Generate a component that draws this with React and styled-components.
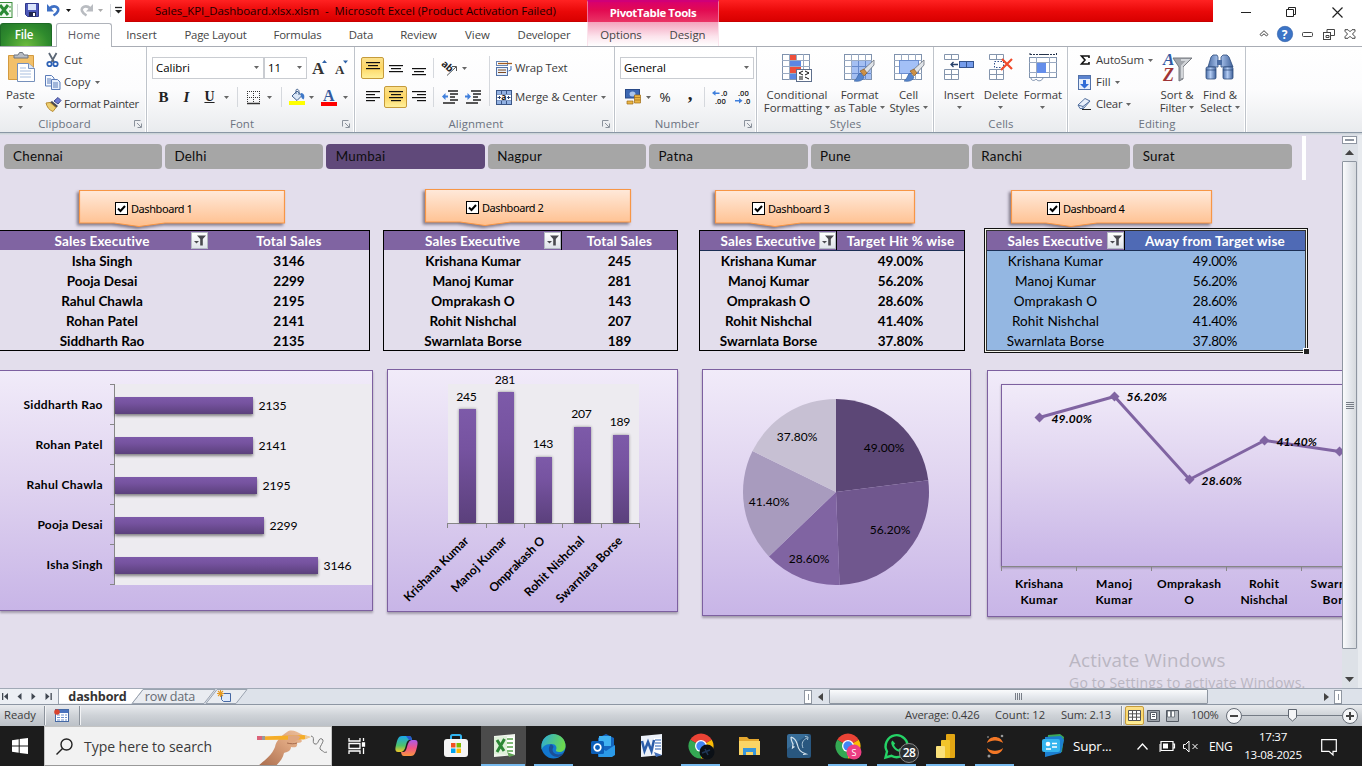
import React from 'react';
import styled, { createGlobalStyle, css } from 'styled-components';

const UI = '"Open Sans", "Noto Sans", sans-serif';
const SHEET = 'Lato, "Open Sans", sans-serif';

const Global = createGlobalStyle`
  * { box-sizing: border-box; }
  body { margin: 0; overflow: hidden; background: #fff; font-family: ${UI}; }
`;

const Window = styled.div`
  width: 1362px; height: 766px; display: flex; flex-direction: column; overflow: hidden;
  font-size: 11.4px; color: #3b3b3b; white-space: nowrap; cursor: default;
`;
const Svg = styled.svg`display: block; flex: none; overflow: visible;`;
const Spacer = styled.div`flex: ${p => (p.$w ? 'none' : 1)}; width: ${p => (p.$w ? p.$w + 'px' : 'auto')};`;

/* ---------- title bar ---------- */
const TitleBar = styled.div`height: 22px; display: flex; flex: none;`;
const QuickAccess = styled.div`width: 125px; height: 20px; display: flex; align-items: center;`;
const TitleStrip = styled.div`
  width: 1088px; display: flex; background: linear-gradient(#ff2222, #e90808 55%, #d90000); border-bottom: 1px solid #c80000;
`;
const TitleText = styled.div`
  width: 462px; padding-left: 30px; line-height: 21px; font-size: 11.4px; color: #1c0000; white-space: pre;
`;
const ContextTitle = styled.div`
  width: 132px; height: 22px; text-align: center; font-weight: 700; font-size: 11.4px; line-height: 21px; color: #fff; letter-spacing: -0.4px;
  background: linear-gradient(#d9006c, #e20a52 40%, #ea3465); border-top: 2px solid #cf0078; border-left: 1px solid #f0709a; border-right: 1px solid #f0709a;
`;
const WinControls = styled.div`flex: 1; display: flex; align-items: center; padding-left: 28px; padding-top: 2px; gap: 35px;`;

/* ---------- ribbon tabs ---------- */
const TabRow = styled.div`height: 25px; display: flex; flex: none; border-bottom: 1px solid #a9adb5;`;
const FileTab = styled.div`
  width: 52px; margin-top: 1px; border-radius: 3px 3px 0 0; background: radial-gradient(ellipse at 50% 100%, #6dbb3e, #2e8a2d 65%, #23752a);
  border: 1px solid #1d6a25; border-bottom: 0; color: #fff; font-weight: 600; text-align: center; line-height: 22px; padding-right: 4px; font-size: 11.6px; letter-spacing: -0.2px;
`;
const Tab = styled.div`
  width: ${p => p.$w}px; flex: none; text-align: center; line-height: 25px; letter-spacing: ${p => p.$ls || 0}px; color: #454545;
  ${p => p.$active && css`
    margin: 1px 0 -1px 4px; line-height: 22px; border: 1px solid #b0b4bb; border-bottom: 0; border-radius: 3px 3px 0 0; background: #fff; color: #5b5b66;
  `}
`;
const ContextTabs = styled.div`
  width: 132px; display: flex; padding-left: 3px; background: linear-gradient(#f4a3bd, #fce3ec 60%, #fff);
  border-left: 1px solid #fbe3ec; border-right: 1px solid #fbe3ec;
`;
const TabTools = styled.div`display: flex; align-items: center; gap: 8px; padding-left: 540px;`;

/* ---------- ribbon ---------- */
const Ribbon = styled.div`
  height: 86px; flex: none; display: flex; background: linear-gradient(#fff, #fcfcfd 50%, #e9ebee); border-bottom: 1px solid #8a97a5;
`;
const RibbonEdge = styled.div`height: 2px; flex: none; background: linear-gradient(#c6ced2, #dfe1e9);`;
const Group = styled.div`
  width: ${p => p.$w}px; display: flex; flex-direction: column; border-right: 1px solid #bfc4cb; box-shadow: inset -1px 0 #fff, 1px 0 #fff;
`;
const GroupBody = styled.div`height: 69px; display: flex; padding-left: ${p => p.$pl || 0}px;`;
const GroupName = styled.div`height: 15px; display: flex; align-items: center; color: #6b7280; padding: 0 4px 0 0;`;
const GroupLabel = styled.div`
  flex: 1; text-align: center; line-height: 15px; padding-left: ${p => (p.$corner ? 0 : 5)}px; padding-right: ${p => (p.$corner ? 5 : 0)}px; letter-spacing: 0.1px;
`;
const Stack = styled.div`display: flex; flex-direction: column; padding-top: ${p => p.$pt || 0}px; gap: ${p => p.$gap || 0}px; width: ${p => (p.$w ? p.$w + 'px' : 'auto')};`;
const Line = styled.div`height: 22px; display: flex; align-items: center; padding-left: ${p => p.$pl || 0}px;`;
const Slot = styled.div`
  width: ${p => p.$w || 23}px; height: ${p => p.$h || 22}px; display: flex; align-items: center; justify-content: center; flex: none;
  ${p => p.$on && css`border: 1px solid #c59b3b; border-radius: 2px; background: linear-gradient(#fbe08b, #fdd766 50%, #fff09a);`}
`;
const Rule = styled.div`width: 1px; height: ${p => p.$h || 20}px; margin: ${p => p.$m || '0 5px'}; background: #d5d8dd; flex: none;`;
const Label = styled.span`margin-left: ${p => p.$ml ?? 4}px; letter-spacing: ${p => p.$ls ?? 0}px; padding-bottom: 2px;`;
const Combo = styled.div`
  width: ${p => p.$w}px; height: 22px; border: 1px solid #c9ccd1; background: #fff; color: #000; display: flex; align-items: center;
  justify-content: space-between; padding: 0 4px 1px 3px; flex: none;
`;
const Large = styled.div`
  width: ${p => p.$w}px; display: flex; flex-direction: column; align-items: center; padding-top: 5px; line-height: 13px; gap: 4px;
  text-align: center; letter-spacing: ${p => p.$ls || 0}px;
`;
const LargeText = styled.div`display: flex; flex-direction: column; align-items: center;`;
const LargeLine = styled.div`display: flex; align-items: center; height: 13px; gap: 3px;`;
const Glyph = styled.span`
  font-family: "Liberation Serif", serif; font-size: ${p => p.$s || 15}px; font-weight: 700; color: #222; line-height: 20px; padding-bottom: ${p => p.$up || 0}px;
  font-style: ${p => (p.$i ? 'italic' : 'normal')}; text-decoration: ${p => (p.$u ? 'underline' : 'none')};
`;
const Percent = styled.span`font-size: 13.5px; padding-bottom: 1px; color: #222;`;

const Caret = ({ c = '#666' }) => <Svg width="5" height="3"><path d="M0 0h5L2.500 3z" fill={c} /></Svg>;
const Corner = () => (
  <Svg width="8" height="8" fill="none" stroke="#8b929c"><path d="M.5 6.500V.5h6M3 3l4 4M7.500 3.500v4h-4" /></Svg>
);
const Bars = ({ y = 1, w = [14, 10, 14, 10], align = 'c', step = 3, h = 14 }) => (
  <Svg width="14" height={h}>
    {w.map((n, i) => <rect key={i} x={align === 'l' ? 0 : align === 'r' ? 14 - n : (14 - n) / 2} y={y + i * step} width={n} height="1.200" fill="#111" />)}
  </Svg>
);

/* ---------- drawn icons ---------- */
const ExcelSmall = () => (
  <Svg width="13" height="16"><rect x="-4" y=".5" width="16" height="15" fill="#f2faf0" stroke="#3b8c3c" /><path d="M0 3l8 10M8 3l-8 10" stroke="#2b8b34" strokeWidth="3" /><path d="M9 4h2v2H9zM9 8h2v2H9z" fill="#8fc68c" /></Svg>
);
const Save = () => (
  <Svg width="14" height="14"><path d="M.5.5h13v13h-11l-2-2z" fill="#4d58b8" stroke="#30398c" /><path d="M3 1h8v6H3z" fill="#dbe5fb" /><path d="M4 9h7v4.500H4z" fill="#20264f" /><path d="M8 10h2v3H8z" fill="#fff" /></Svg>
);
const Undo = ({ c = '#3e6fc4', flip }) => (
  <Svg width="14" height="14" fill="none"><g transform={flip ? 'translate(14 0) scale(-1 1)' : undefined}><path d="M2.500 5.500C7 1.500 12.500 4 11 8c-.7 1.800-2 3-4.500 4.500" stroke={c} strokeWidth="2.600" /><path d="M0 1v7.500h7z" fill={c} /></g></Svg>
);
const Paste = () => (
  <Svg width="28" height="32"><path d="M1.500 3.500h25v24h-25z" fill="#f2c069" stroke="#d39a3f" /><path d="M7 6V3h4l1.500-2.500h3L17 3h4v3z" fill="#b7bcc4" stroke="#6f757f" /><path d="M10.500 11.500h11l6 5v13h-17z" fill="#fff" stroke="#7690bb" /><path d="M21.500 11.500v5h6" fill="#dbe6f6" stroke="#7690bb" /><path d="M13 16h6M13 19h11M13 22h11M13 25h11" stroke="#a8bfdf" /></Svg>
);
const Cut = () => (
  <Svg width="14" height="16" fill="none"><path d="M3 1l5 9M10.500 1l-5 9" stroke="#5b6675" strokeWidth="1.800" /><circle cx="3.500" cy="12" r="2.200" stroke="#2f62b5" strokeWidth="1.800" /><circle cx="9.500" cy="12" r="2.200" stroke="#2f62b5" strokeWidth="1.800" /></Svg>
);
const Copy = () => (
  <Svg width="16" height="15" stroke="#5b7cb8"><path d="M.5.500h6l2.500 2.500v8h-8.500z" fill="#f6f9ff" /><path d="M2 4h4M2 6h4M2 8h4" /><path d="M6.500 4.500h6l2.500 2.500v7.500H6.500z" fill="#e6effc" /><path d="M8 8h5M8 10h5M8 12h5" /></Svg>
);
const Painter = () => (
  <Svg width="16" height="15"><path d="M9 4l4-3.500 3 3L13 7z" fill="#6e7bd0" stroke="#3d478f" /><path d="M7 4l6 5-2 2-7-5z" fill="#4a4a52" /><path d="M1 6l4-.5 6 5-3 4C4 13 2 10 1 6z" fill="#edcf72" stroke="#b98c32" /></Svg>
);
const GrowA = ({ up }) => (
  <Svg width="16" height="18"><text x={up ? 0 : 0} y={up ? 15 : 14.5} fontFamily="Liberation Serif, serif" fontWeight="700" fontSize={up ? 17 : 13} fill="#333">A</text><path d={up ? 'M10 4h5L12.500 1z' : 'M8 1.500h5L10.500 4.500z'} fill="#2f62a8" /></Svg>
);
const Borders = () => (
  <Svg width="13" height="13" stroke="#333"><path d="M.5 0v12M6.500 0v12M12.500 0v12M0 .5h13M0 6.500h13" strokeDasharray="1 1" /><path d="M0 12.500h13" strokeWidth="1.500" /></Svg>
);
const Bucket = () => (
  <Svg width="16" height="16"><path d="M3 7l5-5 5 4.500-5 5z" fill="#dbe7f7" stroke="#43628f" /><path d="M7 5V1.500c0-2 3-1.500 3 1V6" fill="none" stroke="#43628f" /><path d="M12 4c3.500 0 4 4 2.500 6.500-2-1-3.500-4-2.500-6.500z" fill="#3e78c9" /><rect y="12" width="16" height="4" fill="#ffff00" /></Svg>
);
const FontColor = () => (
  <Svg width="16" height="17"><text x="2" y="12" fontFamily="Liberation Serif, serif" fontWeight="700" fontSize="16" fill="#335a9e">A</text><rect y="13" width="16" height="4" fill="#f00" /></Svg>
);
const Orient = () => (
  <Svg width="16" height="15"><text x="-1" y="7" transform="rotate(42 3 5)" fontSize="10" fontWeight="700" fontFamily="Open Sans" fill="#222" textLength="12">ab</text><path d="M5 14.500L14 6M14.500 10V5.500H10" fill="none" stroke="#555" /></Svg>
);
const Indent = ({ right }) => (
  <Svg width="16" height="14"><path d="M6 1h10M8 4h8M8 7h5M8 10h8M1 13h12" stroke="#222" strokeWidth="1.300" /><path d={right ? 'M0 5.500h2.500V3L6 6.500 2.500 10V7.500H0z' : 'M6 5.500H3.500V3L0 6.500 3.500 10V7.500H6z'} fill="#3f7fdc" /></Svg>
);
const Wrap = () => (
  <Svg width="16" height="15"><rect x=".5" y=".5" width="11" height="4" fill="#fff" stroke="#6685b5" /><path d="M2 2.500h14" stroke="#a35c20" strokeWidth="1.300" /><rect x=".5" y="6.500" width="11" height="8" fill="#e9f1fc" stroke="#5572a5" /><path d="M2 9h8M2 11.500h8" stroke="#7d4a22" /><path d="M15 5v4l-2.500 1" fill="none" stroke="#3b6cb7" /></Svg>
);
const Merge = () => (
  <Svg width="16" height="15"><rect x=".5" y=".5" width="15" height="14" fill="#fff" stroke="#3b5788" /><path d="M1 1h14v3H1zM1 11h14v3H1z" fill="#93b2e3" /><path d="M5.500 1v3M10.500 1v3M5.500 11v3M10.500 11v3" stroke="#3b5788" /><path d="M1 4.500h14M1 10.500h14" stroke="#7e98c4" /><path d="M1.500 7.500h3M11.500 7.500h3M3 6l1.500 1.500L3 9M13 6l-1.500 1.500L13 9" stroke="#27406f" fill="none" /><text x="5.300" y="10" fontSize="8.500" fontWeight="700" fontFamily="Open Sans" fill="#111">a</text></Svg>
);
const Currency = () => (
  <Svg width="16" height="16"><rect x=".5" y=".5" width="14" height="8.500" fill="#3c67b2" stroke="#294a87" /><ellipse cx="7.500" cy="5" rx="3" ry="2.500" fill="#a9c4ec" /><path d="M9.500 6h6v8h-6zM2 12h6v3H2z" fill="#eab544" stroke="#9f6c17" strokeWidth=".7" /><path d="M9.500 8.500h6M9.500 11h6" stroke="#9f6c17" strokeWidth=".7" /></Svg>
);
const Decimal = ({ dec }) => (
  <Svg width="16" height="14" fontFamily="Open Sans" fontWeight="600" fontSize="7.600" fill="#222">
    <text x={dec ? 3 : 9} y="5.500">{dec ? '.00' : '.0'}</text><text x={dec ? 9 : 3} y="14">{dec ? '.0' : '.00'}</text>
    <path d={dec ? 'M0 10h4V8l3.500 2.800L4 13.500v-2H0z' : 'M7.500 2.500h-4V.3L0 3l3.500 2.700V4h4z'} fill="#3f7fdc" />
  </Svg>
);
const Grid = () => (
  <g><rect x="1.500" y="2.500" width="27" height="25" fill="#fff" stroke="#8093ae" /><path d="M8.500 2v26M15.500 2v26M22.500 2v26M1 8.500h28M1 14.500h28M1 21.500h28" stroke="#9aaac2" /></g>
);
const Brush = () => (
  <g><path d="M20 18L31 8v5l-8 9z" fill="#dfe3e8" stroke="#6c727c" strokeWidth=".8" /><path d="M17 19l4-2 3 4-3 3z" fill="#ce9145" stroke="#80531f" strokeWidth=".6" /><path d="M11 29c3-1 3-6 6-8l4 4c-1 4-6 5-10 4z" fill="#5584cb" stroke="#365f9f" strokeWidth=".6" /></g>
);
const CondFmt = () => (
  <Svg width="32" height="32"><Grid /><path d="M9 3h6v5H9zM9 15h11v6H9z" fill="#ee4f3a" /><path d="M9 9h11v5H9zM9 22h6v5H9z" fill="#5b87e2" /><rect x="15.500" y="17.500" width="15" height="12" fill="#fff" stroke="#5e6f8c" /><path d="M22 19l-4 2 4 2M18 25h4M18 27h4M24 19l4 2-4 2M24 25l4 2" fill="none" stroke="#111" /></Svg>
);
const FmtTable = () => <Svg width="34" height="32"><Grid /><path d="M9 9h19v18H9z" fill="#86a9ee" opacity=".75" /><path d="M15.500 9v18M22.500 9v18M9 14.500h19M9 21.500h19" stroke="#6689cc" /><Brush /></Svg>;
const CellStyles = () => <Svg width="32" height="32"><Grid /><rect x="6.500" y="8.500" width="19" height="13" fill="#a3c0f7" stroke="#6a8dd0" /><Brush /></Svg>;
const MiniGrid = ({ y, x = 1 }) => <path d={`M${x + .5} ${y + .5}h14v10h-14zM${x + 7.500} ${y}v10M${x} ${y + 5.500}h14`} fill="#fff" stroke="#8495ad" />;
const InsertIcon = () => <Svg width="32" height="32"><path d="M1.500 2.500h14v5h-14zM8.500 2v5" fill="#fff" stroke="#8495ad" /><MiniGrid y={17} /><rect x="16.500" y="9.500" width="14" height="6" fill="#759ceb" stroke="#34538d" /><path d="M23.500 10v5" stroke="#34538d" /><path d="M15 12.500H8M10.500 10L8 12.500l2.500 2.500" fill="none" stroke="#253f6a" strokeWidth="1.300" /></Svg>;
const DeleteIcon = () => <Svg width="32" height="32"><path d="M4.500 2.500h14v5h-14zM11.500 2v5" fill="#fff" stroke="#8495ad" /><MiniGrid y={17} x={4} /><path d="M9.500 9.500h9v6h-9z" fill="none" stroke="#34538d" strokeDasharray="1.500 1.500" /><path d="M17 7l10 10M27 7L16 18" stroke="#f04a2b" strokeWidth="2.200" /></Svg>;
const FormatIcon = () => <Svg width="32" height="32"><rect x="2.500" y="5.500" width="27" height="20" fill="#fff" stroke="#8093ae" /><path d="M9.500 5v20M22.500 5v20M2 10.500h28M2 20.500h28" stroke="#9aaac2" /><rect x="10" y="11" width="9" height="10" fill="#658eea" /><path d="M3 1v3M3 2.500h9M20 2.500h10M29.500 1v3" stroke="#25334b" strokeDasharray="2 1" /><path d="M12 2.500h8" stroke="#25334b" /><path d="M4 26c0 3 4 3 5 1 2 3 6 2 7-1" fill="#fff" stroke="#8093ae" /></Svg>;
const FillIcon = () => <Svg width="13" height="15"><rect x=".5" y=".5" width="12" height="14" fill="#e5eefb" stroke="#5271a8" /><path d="M1 1h11v3H1z" fill="#5c84cf" /><path d="M5 5h3v4h3l-4.500 4.500L2 9h3z" fill="#2f6bd6" /></Svg>;
const Eraser = () => <Svg width="15" height="12"><path d="M1 7l7-6.500 5 2.500-6.500 7.500H3z" fill="#e8effb" stroke="#53709e" /><path d="M1 7l5 1.500V11M6 8.500L13 3" fill="none" stroke="#53709e" /><path d="M5 11.500h9" stroke="#222" /></Svg>;
const SortIcon = () => (
  <Svg width="32" height="32"><path d="M12 6h19l-9 9v12l-4 2V15z" fill="#a2a6ac" stroke="#74787f" /><path d="M20 8h7l-6 6v12" fill="none" stroke="#d3d6da" strokeWidth="2" /><g fontFamily="Liberation Serif, serif" fontWeight="700" fontStyle="italic"><text x="2" y="13" fontSize="17" fill="#335aa3">A</text><text x="2" y="29" fontSize="18" fill="#9f3436">Z</text></g></Svg>
);
const Binoculars = () => (
  <Svg width="32" height="32"><defs><linearGradient id="bino"><stop offset="0" stopColor="#4a6da6" /><stop offset=".45" stopColor="#b3ccf3" /><stop offset="1" stopColor="#3f619a" /></linearGradient></defs><path d="M7 5l2-2h4l1 2v10H4zM17 5l2-2h4l2 2 4 10H17z" fill="url(#bino)" stroke="#2e4c7c" strokeWidth=".8" /><path d="M13 8h5v5h-5z" fill="#4b6da4" /><rect x="2" y="15" width="10" height="12" rx="1.500" fill="url(#bino)" stroke="#2e4c7c" strokeWidth=".8" /><rect x="19" y="15" width="10" height="12" rx="1.500" fill="url(#bino)" stroke="#2e4c7c" strokeWidth=".8" /><path d="M2 18h10M19 18h10" stroke="#2e4c7c" strokeWidth=".8" /></Svg>
);

const BigButton = ({ w, icon, lines, ls, caretBelow }) => (
  <Large $w={w} $ls={ls}>
    {icon}
    <LargeText>
      {lines.map((l, i) => <LargeLine key={l}>{l}{!caretBelow && i === lines.length - 1 && <Caret />}</LargeLine>)}
      {caretBelow && <LargeLine><Caret /></LargeLine>}
    </LargeText>
  </Large>
);
const Foot = ({ children, corner }) => <GroupName><GroupLabel $corner={corner}>{children}</GroupLabel>{corner && <Corner />}</GroupName>;

const RibbonPanel = () => (
  <Ribbon>
    <Group $w={147}>
      <GroupBody>
        <BigButton w={41} icon={<Paste />} lines={['Paste']} caretBelow />
        <Stack $pt={2}>
          <Line $pl={5}><Slot $w={14}><Cut /></Slot><Label>Cut</Label></Line>
          <Line $pl={4}><Copy /><Label $ml={3} $ls={-0.1}>Copy</Label><Spacer $w={5} /><Caret /></Line>
          <Line $pl={4}><Painter /><Label $ml={3} $ls={-0.32}>Format Painter</Label></Line>
        </Stack>
      </GroupBody>
      <Foot corner>Clipboard</Foot>
    </Group>
    <Group $w={208}>
      <GroupBody $pl={5}>
        <Stack $pt={10} $gap={7}>
          <Line><Combo $w={112}>Calibri<Caret /></Combo><Combo $w={43}>11<Caret /></Combo><Spacer $w={5} /><GrowA up /><Spacer $w={7} /><GrowA /></Line>
          <Line>
            <Slot><Glyph $up={1}>B</Glyph></Slot><Slot><Glyph $i $up={1}>I</Glyph></Slot><Slot><Glyph $u $s={14} $up={1}>U</Glyph></Slot><Slot $w={11}><Caret /></Slot>
            <Rule /><Slot $w={20}><Borders /></Slot><Slot $w={13}><Caret /></Slot><Rule /><Slot $w={20}><Bucket /></Slot><Slot $w={9}><Caret /></Slot>
            <Slot $w={25}><FontColor /></Slot><Slot $w={9}><Caret /></Slot>
          </Line>
        </Stack>
      </GroupBody>
      <Foot corner>Font</Foot>
    </Group>
    <Group $w={260}>
      <GroupBody $pl={6}>
        <Stack $pt={10} $gap={7} $w={128}>
          <Line><Slot $on><Bars y={1} w={[14, 10, 14]} /></Slot><Slot><Bars y={4} w={[14, 10, 14]} /></Slot><Slot><Bars y={7} w={[14, 10, 14]} h={15} /></Slot><Rule $m="0 4px 0 3px" /><Slot $w={24}><Orient /></Slot><Slot $w={5}><Caret /></Slot></Line>
          <Line><Slot><Bars y={1} w={[14, 9, 14, 9]} align="l" /></Slot><Slot $on><Bars /></Slot><Slot><Bars y={1} w={[14, 9, 14, 9]} align="r" /></Slot><Rule $m="0 4px 0 3px" /><Slot><Indent /></Slot><Slot><Indent right /></Slot></Line>
        </Stack>
        <Rule $h={50} $m="9px 6px 0 0" />
        <Stack $pt={10} $gap={7}>
          <Line><Wrap /><Label $ml={3} $ls={-0.2}>Wrap Text</Label></Line>
          <Line><Merge /><Label $ml={3} $ls={-0.1}>Merge &amp; Center</Label><Spacer $w={4} /><Caret /></Line>
        </Stack>
      </GroupBody>
      <Foot corner>Alignment</Foot>
    </Group>
    <Group $w={142}>
      <GroupBody $pl={5}>
        <Stack $pt={10} $gap={7}>
          <Combo $w={134}>General<Caret /></Combo>
          <Line><Slot $w={26}><Currency /></Slot><Caret /><Slot $w={28}><Percent>%</Percent></Slot><Slot $w={22}><Glyph $s={19} $up={7}>,</Glyph></Slot><Rule $m="0 4px 0 3px" /><Slot $w={22}><Decimal /></Slot><Slot $w={24}><Decimal dec /></Slot></Line>
        </Stack>
      </GroupBody>
      <Foot corner>Number</Foot>
    </Group>
    <Group $w={177}>
      <GroupBody $pl={5}>
        <BigButton w={70} icon={<CondFmt />} lines={['Conditional', 'Formatting']} />
        <BigButton w={55} icon={<FmtTable />} lines={['Format', 'as Table']} ls={-0.1} />
        <BigButton w={43} icon={<CellStyles />} lines={['Cell', 'Styles']} ls={-0.1} />
      </GroupBody>
      <Foot>Styles</Foot>
    </Group>
    <Group $w={134}>
      <GroupBody $pl={4}>
        <BigButton w={42} icon={<InsertIcon />} lines={['Insert']} caretBelow />
        <BigButton w={42} icon={<DeleteIcon />} lines={['Delete']} caretBelow />
        <BigButton w={42} icon={<FormatIcon />} lines={['Format']} caretBelow />
      </GroupBody>
      <Foot>Cells</Foot>
    </Group>
    <Group $w={178}>
      <GroupBody $pl={9}>
        <Stack $pt={2} $w={77}>
          <Line><Slot $w={15}><Svg width="10" height="10"><path d="M9 3V1H1.500L5 5 1.500 9H9V7" fill="none" stroke="#111" strokeWidth="1.600" /></Svg></Slot><Label $ls={-0.15}>AutoSum</Label><Spacer $w={4} /><Caret /></Line>
          <Line><Slot $w={15}><FillIcon /></Slot><Label>Fill</Label><Spacer $w={4} /><Caret /></Line>
          <Line><Slot $w={15}><Eraser /></Slot><Label $ls={-0.2}>Clear</Label><Spacer $w={4} /><Caret /></Line>
        </Stack>
        <BigButton w={46} icon={<SortIcon />} lines={['Sort &', 'Filter']} />
        <BigButton w={40} icon={<Binoculars />} lines={['Find &', 'Select']} />
      </GroupBody>
      <Foot>Editing</Foot>
    </Group>
  </Ribbon>
);

/* ---------- worksheet ---------- */
const Work = styled.div`height: 553px; flex: none; display: flex;`;
const Sheet = styled.div`width: 1342px; height: 553px; overflow: hidden; background: #e3deec; position: relative; font-family: ${SHEET}; color: #000;`;
const Slicers = styled.div`height: 55px; display: flex; padding: 9px 0 0 3.6px; gap: 3px;`;
const Slicer = styled.div`
  width: 158.4px; height: 25px; border-radius: 4px; background: ${p => (p.$on ? '#60497a' : '#a6a6a6')}; color: #0d0d0d; font-size: 13.4px;
  line-height: 25px; padding-left: 9.4px; letter-spacing: 0.25px; flex: none;
`;
const SlicerEdge = styled.div`width: 4px; height: 44px; background: #fff; margin: -8px 0 0 7.4px;`;
const CalloutRow = styled.div`height: 40px; display: flex; align-items: flex-start;`;
const Callout = styled.div`
  width: ${p => p.$w}px; height: 34px; margin-left: ${p => p.$ml}px; margin-top: ${p => p.$mt || 0}px; position: relative; display: flex; align-items: center;
  padding: 3px 0 0 ${p => p.$pl}px; font-family: "Noto Sans", sans-serif; font-size: 11px; letter-spacing: -0.42px; flex: none;
`;
const CalloutShape = styled.svg`position: absolute; left: 0; top: 0; overflow: visible; filter: drop-shadow(-2px 2px 1.5px rgba(60,50,70,.6));`;
const Check = styled.div`width: 13px; height: 13px; border: 1px solid #000; background: #fff; margin-right: 3px; position: relative; display: flex; align-items: center; justify-content: center;`;
const CalloutText = styled.span`position: relative;`;

const CalloutBox = ({ w, ml, mt, pl, n }) => (
  <Callout $w={w} $ml={ml} $mt={mt} $pl={pl}>
    <CalloutShape width={w} height="34"><path d={`M.5.5H${w - .5}V33H86L60 36.500 35 33H.5z`} fill="url(#peach)" stroke="#f79646" strokeWidth="1.200" /></CalloutShape>
    <Check><Svg width="9" height="8"><path d="M1 3.500L3.500 6 8 1" fill="none" stroke="#000" strokeWidth="2" /></Svg></Check>
    <CalloutText>Dashboard {n}</CalloutText>
  </Callout>
);

const Tables = styled.div`height: 139px; display: flex; align-items: flex-start;`;
const Table = styled.div`
  width: ${p => p.$w}px; margin-left: ${p => p.$ml}px; height: 121px; flex: none; display: grid; grid-template-columns: ${p => p.$cols}; grid-template-rows: 19px; grid-auto-rows: 20px;
  border: 1px solid #000; border-left-width: ${p => (p.$cut ? 0 : 1)}px; position: relative; font-weight: ${p => (p.$sel ? 400 : 700)};
  ${p => p.$sel && css`background: #94b7e2; outline: 1px solid #111; outline-offset: 1px; border-color: #333; box-shadow: 0 0 0 1px #f4f4ec;`}
`;
const Head = styled.div`
  height: 19px; background: ${p => (p.$sel ? '#4f6ab5' : '#8064a2')}; color: #fff; font-weight: 700; font-size: 13.5px; line-height: 20px; text-align: center;
  padding: 1px ${p => p.$pr || 0}px 0 0; display: flex; justify-content: center; align-items: center; position: relative;
  border-right: ${p => (p.$rule ? '1px solid #000' : '0')}; letter-spacing: 0.19px; box-shadow: ${p => (p.$line ? '0 1px #1c2f55' : 'none')};
`;
const Cell = styled.div`
  font-size: 13.5px; line-height: 22px; height: 20px; text-align: center; padding-right: ${p => p.$pr || 0}px; letter-spacing: ${p => p.$ls ?? 0}px;
`;
const FilterBtn = styled.div`
  position: absolute; right: ${p => p.$r || 0}px; top: 1px; width: 17px; height: 17px; background: linear-gradient(#fff, #dfe3ea); border: 1px solid #b4b9c4;
  display: flex; align-items: center; justify-content: center;
`;
const FillHandle = styled.div`position: absolute; right: -4px; bottom: -4px; width: 6px; height: 6px; background: #222; border: solid #fff; border-width: 1px 0 0 1px;`;

const DataTable = ({ w, ml, cols, heads, rows, sel, cut, pr0, pr1, fr, rule, line }) => (
  <Table $w={w} $ml={ml} $cols={cols} $sel={sel} $cut={cut}>
    <Head $pr={pr0} $rule={rule} $line={line}>
      {heads[0]}
      <FilterBtn $r={fr}><Svg width="12" height="11"><path d="M3 .5h9L8.800 4v6.500H6.200V4z" fill="#4a4a50" /><path d="M0 6h5L2.500 8.500z" fill="#4a4a50" /></Svg></FilterBtn>
    </Head>
    <Head $sel={sel} $pr={pr1} $line={line}>{heads[1]}</Head>
    {rows.map(r => (
      <React.Fragment key={r[0]}><Cell $pr={pr0} $ls={sel ? 0.12 : 0}>{r[0]}</Cell><Cell $pr={pr1} $ls={sel ? -0.15 : 0}>{r[1]}</Cell></React.Fragment>
    ))}
    {sel && <FillHandle />}
  </Table>
);

const Charts = styled.div`display: flex; align-items: flex-start;`;
const Chart = styled.div`
  width: ${p => p.$w}px; height: ${p => p.$h}px; margin-left: ${p => p.$ml || 0}px; margin-top: ${p => p.$mt || 0}px; flex: none;
  background: linear-gradient(#f1ebf9, #e0d4f0 45%, #c8b5e7); border: 1px solid #7d60a0; border-left-width: ${p => (p.$cut ? 0 : 1)}px;
  box-shadow: 0 2px 2px rgba(70,60,80,.4);
`;
const Watermark = styled.div`position: absolute; left: 1069px; top: 514px; font-family: ${UI}; color: #bab6c2;`;
const WatermarkTitle = styled.div`font-size: 18.8px; line-height: 22px; letter-spacing: 0.15px;`;
const WatermarkNote = styled.div`font-size: 14px; line-height: 20px; margin-top: 2px; letter-spacing: 0.2px;`;

const names = ['Krishana Kumar', 'Manoj Kumar', 'Omprakash O', 'Rohit Nishchal', 'Swarnlata Borse'];
const pct = ['49.00%', '56.20%', '28.60%', '41.40%', '37.80%'];
const zip = b => names.map((n, i) => [n, b[i]]);

const BarChart = () => {
  const data = [['Siddharth Rao', 2135, 138, 79], ['Rohan Patel', 2141, 138, 67], ['Rahul Chawla', 2195, 142, 76], ['Pooja Desai', 2299, 149, 65], ['Isha Singh', 3146, 203, 56]];
  return (
    <Svg width="372" height="239" fontFamily={SHEET}>
      <defs><linearGradient id="barV" x1="0" y1="0" x2="0" y2="1"><stop offset="0" stopColor="#7d5aa9" /><stop offset=".35" stopColor="#7653a0" /><stop offset="1" stopColor="#5b407c" /></linearGradient></defs>
      <rect x="115" y="13" width="257" height="201" fill="#edebf0" />
      <path d="M114.500 13v201M110 13.500h5M110 53.500h5M110 93.500h5M110 133.500h5M110 173.500h5M110 213.500h5" stroke="#868686" />
      {data.map(([n, v, w, tw], i) => (
        <g key={n}>
          <rect x="115" y={26 + i * 40} width={w} height="17" fill="url(#barV)" style={{ filter: 'drop-shadow(0 2px 1.500px rgba(0,0,0,.45))' }} />
          <text x="102.500" y={38 + i * 40} textAnchor="end" fontWeight="700" fontSize="12" textLength={tw}>{n}</text>
          <text x={w + 120.5} y={39 + i * 40} fontSize="12.200" textLength="28">{v}</text>
        </g>
      ))}
    </Svg>
  );
};
const ColumnChart = () => {
  const d = [[245, 71, 17, 39], [281, 110, 16, 22], [143, 148, 16, 87], [207, 186, 17, 57], [189, 225, 16, 65]];
  const ends = [81.5, 119.5, 157.5, 197, 235];
  const len = [86, 73, 73, 79, 88];
  return (
    <Svg width="289" height="241" fontFamily={SHEET}>
      <rect x="60" y="14" width="191" height="139" fill="#edebf0" />
      <path d="M59 153.500h192.500M59.500 153v5M98.500 153v5M136.500 153v5M174.500 153v5M213.500 153v5M251.500 153v5" stroke="#868686" />
      {d.map(([v, x, w, y], i) => (
        <g key={v}>
          <rect x={x} y={y} width={w} height={153 - y} fill="url(#barV)" style={{ filter: 'drop-shadow(0 0 1.500px rgba(0,0,0,.4))' }} />
          <text x={x + w / 2 - 1} y={y - (i === 1 || i === 0 ? 8.5 : 9.5)} textAnchor="middle" fontSize="12.200" textLength="20.500">{v}</text>
          <text x={ends[i]} y="171.500" transform={`rotate(-45 ${ends[i]} 171.500)`} textAnchor="end" fontWeight="700" fontSize="12" textLength={len[i]}>{names[i]}</text>
        </g>
      ))}
    </Svg>
  );
};
const PieChart = () => {
  const v = [49, 56.2, 28.6, 41.4, 37.8];
  const col = ['#5c4776', '#70578e', '#8064a2', '#a89bbe', '#c7c0d3'];
  const at = [[181, 82], [187, 164], [106, 193], [66, 136], [94, 71]];
  const sum = v.reduce((a, b) => a + b);
  const P = t => `${133 + 93 * Math.sin(t)} ${122 - 93 * Math.cos(t)}`;
  let a = 0;
  return (
    <Svg width="267" height="244" fontFamily={SHEET} fontSize="12">
      {v.map((n, i) => { const s = a; a += (n / sum) * 2 * Math.PI; return <path key={i} d={`M133 122L${P(s)}A93 93 0 0 1 ${P(a)}z`} fill={col[i]} />; })}
      {at.map(([x, y], i) => <text key={i} x={x} y={y} textAnchor="middle" textLength="40.500">{pct[i]}</text>)}
    </Svg>
  );
};
const LineChart = () => {
  const pts = [[51.5, 46.5], [126.5, 25.5], [201.5, 108.5], [276.5, 69.5], [351.5, 80.5]];
  const labels = [['Krishana', 48, 'Kumar', 37], ['Manoj', 36, 'Kumar', 37], ['Omprakash', 64, 'O', 9], ['Rohit', 30, 'Nishchal', 47], ['Swarnlata', 57, 'Borse', 33]];
  return (
    <Svg width="390" height="245" fontFamily={SHEET} fontSize="12" fontWeight="700">
      <defs><linearGradient id="plot" x1="0" y1="0" x2="0" y2="1"><stop offset="0" stopColor="#f1ebf9" /><stop offset=".45" stopColor="#e0d4f0" /><stop offset="1" stopColor="#c8b5e7" /></linearGradient></defs>
      <rect x="13.500" y="13.500" width="376" height="182" fill="url(#plot)" stroke="#7d60a0" style={{ filter: 'drop-shadow(0 1.500px 1px rgba(0,0,0,.3))' }} />
      <path d="M13 195.500h377M13.500 195v5M88.500 195v5M163.500 195v5M238.500 195v5M313.500 195v5" stroke="#868686" />
      <path d={'M' + pts.map(p => p.join(' ')).join('L')} fill="none" stroke="#8064a2" strokeWidth="3" />
      {pts.map(([x, y], i) => <path key={i} d={`M${x} ${y - 5}l5 5-5 5-5-5z`} fill="#8064a2" />)}
      {pts.slice(0, 4).map(([x, y], i) => <text key={i} x={x + 12} y={y + 5.500 - (i === 1 ? 1 : 0)} fontStyle="italic" textLength="40.500">{pct[i]}</text>)}
      {labels.map(([p, pw, q, qw], i) => (
        <g key={i} textAnchor="middle"><text x={51 + i * 75} y="217" textLength={pw}>{p}</text><text x={51 + i * 75} y="233" textLength={qw}>{q}</text></g>
      ))}
    </Svg>
  );
};

/* ---------- scrollbars & sheet tabs ---------- */
const VScroll = styled.div`width: 20px; display: flex; flex-direction: column; align-items: center; background: #dde1e7; padding-right: 1px; border-right: 4px solid #e8ebef;`;
const SplitBox = styled.div`width: 15px; height: 8px; margin-top: 1px; border: 1px solid #8f96a1; background: #fff; padding: 2px; flex: none; &::after { content: ''; display: block; height: 2px; background: #8f96a1; }`;
const ArrowBox = styled.div`height: ${p => p.$h}px; display: flex; align-items: center; justify-content: center; flex: none; width: 16px;`;
const VThumb = styled.div`
  width: 15px; height: 488px; border: 1px solid #8e96a1; border-radius: 1px; background: linear-gradient(90deg, #fafbfc, #e6e9ee 50%, #d6dade); display: flex; align-items: center; justify-content: center; flex: none;
`;
const SheetBar = styled.div`height: 16px; flex: none; display: flex; background: #dde2ea; border-top: 1px solid #a1a9b6; align-items: stretch;`;
const Nav = styled.div`width: 59px; display: flex; align-items: center; gap: 9px; padding-left: 2px; border-right: 1px solid #99a1ad; background: #eceff4;`;
const SheetTabs = styled.div`width: 745px; height: 15px; display: flex; position: relative;`;
const TabShape = styled.svg`position: absolute; left: 0; top: 0;`;
const NewTab = styled.div`position: relative; padding: 1px 0 0 13px;`;
const TabName = styled.div`
  width: ${p => p.$w}px; font-size: 12.6px; line-height: 15px; text-align: center; position: relative; color: ${p => (p.$on ? '#333' : '#666b73')}; font-weight: ${p => (p.$on ? 700 : 400)}; letter-spacing: ${p => p.$ls}px; padding-left: 1px;
`;
const HScroll = styled.div`width: 538px; display: flex; align-items: center;`;
const HThumb = styled.div`
  width: 379px; height: 15px; border: 1px solid #8e96a1; border-radius: 1px; background: linear-gradient(#fafbfc, #e6e9ee 50%, #d6dade); display: flex; align-items: center; justify-content: center;
`;
const VSplit = styled.div`width: 8px; height: 14px; border: 1px solid #8f96a1; background: #fff; padding: 3px 2px; &::after { content: ''; display: block; width: 1px; height: 6px; background: #8f96a1; margin-left: 1px; }`;

/* ---------- status bar ---------- */
const Status = styled.div`
  height: 22px; flex: none; display: flex; align-items: center; background: linear-gradient(#e9ebee, #ced2d7 50%, #bcc1c7); border-top: 1px solid #8d96a3; font-size: 11.2px; color: #3c3c3c;
`;
const StatusText = styled.div`width: ${p => p.$w}px; padding-left: ${p => p.$pl || 0}px; padding-bottom: 2px; letter-spacing: ${p => p.$ls || 0}px;`;
const StatusRule = styled.div`width: 2px; height: 19px; background: #8c939c; border-right: 1px solid #f2f3f5;`;
const Round = styled.div`
  width: 16px; height: 16px; border-radius: 50%; border: 1px solid #666d77; background: #f5f6f8; display: flex; align-items: center; justify-content: center; flex: none;
`;

/* ---------- taskbar ---------- */
const Taskbar = styled.div`height: 40px; flex: none; display: flex; background: #1c1c1c; color: #fff;`;
const Start = styled.div`width: 44px; display: flex; align-items: center; padding-left: 12px;`;
const Search = styled.div`width: 288px; height: 40px; background: #f2f2f2; border: 1px solid #c4c4c4; border-bottom-color: #999; display: flex; align-items: center; padding-left: 11px; color: #3a3a3a; font-size: 14px; overflow: hidden;`;
const SearchText = styled.div`width: 171px; padding-left: 11px; letter-spacing: -0.04px;`;
const TaskApp = styled.div`
  width: 49px; height: 40px; display: flex; align-items: center; justify-content: center; position: relative; flex: none;
  &::after { content: ''; display: ${p => (p.$open ? 'block' : 'none')}; position: absolute; left: 5px; right: 5px; bottom: 0; height: 2px; background: #76b9ed; }
  ${p => p.$active && css`&::before { content: ''; position: absolute; left: 1px; right: 3px; top: 0; bottom: 0; background: #4b4b4b; } &::after { left: 1px; right: 4px; }`}
  & > svg { position: relative; }
`;
const Badge = styled.div`
  position: absolute; left: 27px; top: 17px; width: 20px; height: 20px; border-radius: 50%; background: #2b2f31; border: 1px solid #8b8b8b; font-size: 12px; font-weight: 600; line-height: 18px; text-align: center; letter-spacing: -0.5px;
`;
const NewsText = styled.div`width: 62px; padding-left: 7px; font-size: 13.5px; align-self: center; letter-spacing: -0.2px;`;
const Tray = styled.div`display: flex; align-items: center; width: 109px; font-size: 12px; letter-spacing: -0.4px; color: #fff;`;
const Clock = styled.div`width: 72px; text-align: center; font-size: 11.6px; line-height: 18px; padding-top: 2px; letter-spacing: -0.3px;`;

const Chrome = ({ badge }) => (
  <Svg width="26" height="26"><path d="M13 13L2.200 6.700A12.500 12.500 0 0 1 23.800 6.700z" fill="#ea4335" /><path d="M13 13L23.800 6.700A12.500 12.500 0 0 1 13 25.500z" fill="#fbbc05" /><path d="M13 13v12.500A12.500 12.500 0 0 1 2.200 6.700z" fill="#34a853" /><circle cx="13" cy="13" r="6" fill="#fff" /><circle cx="13" cy="13" r="4.700" fill="#4285f4" />
    {badge ? <g><circle cx="19" cy="19" r="7.500" fill="#ec3f83" /><text x="16.500" y="22.500" fontSize="9" fill="#fff" fontFamily="Open Sans">S</text></g> : <g><circle cx="19" cy="19" r="7.500" fill="#0b1016" /><path d="M14 20l8-3M17 16l3 6" stroke="#203757" strokeWidth="1.500" /></g>}
  </Svg>
);
const Hand = () => (
  <Svg width="72" height="38"><defs><linearGradient id="skin" x1="0" y1="1" x2="1" y2="0"><stop offset="0" stopColor="#a96c4d" /><stop offset=".6" stopColor="#dba27c" /><stop offset="1" stopColor="#edc09c" /></linearGradient></defs>
    <path d="M1 39C8 33 15 28 18 20c1-6 5-10 12-15 4-3 9-1 16 3 3 3 0 4-4 3 5 3 3 5-2 5 1 4-2 5-6 4 0 4-4 5-7 6-1 6-5 9-8 13z" fill="url(#skin)" /><path d="M31 11c5 2 8 1 11-1M30 16c4 1 7 1 10 0" fill="none" stroke="#a66a4c" />
    <path d="M4 9.500l43-1.500 6 2-6 2.500L4 13z" fill="#f5ad27" /><path d="M0 9h5v4H0z" fill="#db6379" /><path d="M5 9h3v4H5z" fill="#999" /><path d="M48 8l6 2-6 2.500z" fill="#ebc999" />
    <path d="M31 9c6-1 12-1 12 1s-7 7-12 5" fill="#dfa680" /><path d="M54 9c5 1 0 7 4 8s3-7 7-5-5 9-1 11 2 3 6 2" fill="none" stroke="#777" />
  </Svg>
);

const Icons = {
  task: <Svg width="18" height="18" fill="none" stroke="#fff" strokeWidth="1.300"><path d="M1 1v3h11V1M1 17v-3h11v3" /><path d="M1 6.500h11v5H1zM15.500 1v3M15.500 11v6" /><path d="M14.500 6h2v3h-2z" fill="#fff" /></Svg>,
  copilot: <Svg width="23" height="22"><defs><linearGradient id="cp1" x1="0" y1="0" x2="0" y2="1"><stop offset="0" stopColor="#18a6ec" /><stop offset=".6" stopColor="#4fc26a" /><stop offset="1" stopColor="#f0c928" /></linearGradient><linearGradient id="cp2" x1="0" y1="0" x2="0" y2="1"><stop offset="0" stopColor="#aa5bea" /><stop offset=".5" stopColor="#f05487" /><stop offset="1" stopColor="#f9963e" /></linearGradient></defs><path d="M7 1h7c2 0 2.500 1.500 3 4h-2c-2 0-3 1-4 5-1.500 6-3 7-6 7H3c-3 0-3-3-2-7C2.500 4 3.500 1 7 1z" fill="url(#cp1)" /><path d="M16 21H9c-2 0-2.500-1.500-3-4h2c2 0 3-1 4-5 1.500-6 3-7 6-7h2c3 0 3 3 2 7-1.500 6-2.500 9-6 9z" fill="url(#cp2)" /><path d="M11 1h3c2 0 2.500 1.500 3 4h-3z" fill="#2858cf" /></Svg>,
  store: <Svg width="24" height="24"><path d="M7 6V2.500Q7 1 8.500 1h7Q17 1 17 2.500V6" fill="none" stroke="#32b5f1" strokeWidth="2" /><rect x="0" y="5" width="24" height="18" rx="3" fill="#f5f5f5" /><path d="M7 9h4.500v4.500H7z" fill="#f25022" /><path d="M12.500 9H17v4.500h-4.500z" fill="#7fba00" /><path d="M7 14.500h4.500V19H7z" fill="#00a4ef" /><path d="M12.500 14.500H17V19h-4.500z" fill="#ffb900" /></Svg>,
  excel: <Svg width="23" height="24"><path d="M1 2l21-2v21L1 23z" fill="#f1f6ee" /><path d="M13 3h8v17h-8z" fill="#fff" /><path d="M14 5h6M14 9h6M14 13h6M14 17h6" stroke="#80ba77" strokeWidth="2" /><path d="M1 3l13-1v19L1 20z" fill="#dff0da" /><path d="M4 6l7 11M11.500 5L4 18" stroke="#2c8735" strokeWidth="3" /><path d="M14 18l8 3-6 2z" fill="#61a556" /></Svg>,
  edge: <Svg width="25" height="25"><defs><linearGradient id="eg" x1="0" y1="0" x2="1" y2=".3"><stop offset="0" stopColor="#2aa9dd" /><stop offset="1" stopColor="#6bd84f" /></linearGradient></defs><circle cx="12.500" cy="12.500" r="12" fill="#1277cf" /><path d="M.5 12A12 12 0 0 1 24.500 12c0 4-3 6-6.500 6-2 0-3.500-.7-3-2 1.500-3-.5-6-4-6C6 10 2 11 .5 16z" fill="url(#eg)" /><path d="M9 11c-3 5 0 11 7 12 3 0 5-1.500 6.500-4-3 2-8 2-10-.5-1.500-2-1-4 0-5.500-.5-2-2-3-3.500-2z" fill="#1b4f98" /></Svg>,
  outlook: <Svg width="24" height="24"><path d="M7 4l8-4 8 4v15l-4 4H7z" fill="#1466c0" /><path d="M8 2h12v10H8z" fill="#41b2f2" /><path d="M6 12l9 5 9-6v10l-3 2H8z" fill="#2b9ae8" /><rect x="0" y="7" width="13" height="13" rx="1.500" fill="#0b5eb8" /><circle cx="6.500" cy="13.500" r="3.300" fill="none" stroke="#fff" strokeWidth="1.700" /></Svg>,
  word: <Svg width="23" height="24"><path d="M1 2l21-2v21L1 23z" fill="#edf2fa" /><path d="M14 4h7v16h-7z" fill="#fff" /><path d="M15 6h6M15 9h6M15 12h6M15 15h6" stroke="#6d93cb" strokeWidth="1.500" /><path d="M2 7l2.500 10L8 8l3.500 9L14 6" fill="none" stroke="#2b5da9" strokeWidth="2.500" /><path d="M14 18l8 3-6 2z" fill="#4470ba" /></Svg>,
  folder: <Svg width="23" height="20"><path d="M1 1h8l2 2h10v16H1z" fill="#e5a82f" /><path d="M1 5h21v14H1z" fill="#fbd565" /><path d="M5 12h13v7h-3v-3H8v3H5z" fill="#3896da" /></Svg>,
  mysql: <Svg width="24" height="24"><rect width="24" height="24" rx="2" fill="#29577f" /><path d="M2 0h20L0 15V2z" fill="#386d98" /><path d="M4 3c4 1 5.500 4 6.500 8 1 5 3 7 8.500 9l-3 .5M4 3c0 4 1 5 2 7l-.5 4 2-1.500" fill="none" stroke="#d7e5ee" strokeWidth="1.200" /><path d="M16 14c-2-5 0-8 4-10M18 2.500l3 .5-.5 3" fill="none" stroke="#a9c4d6" strokeWidth="1" /></Svg>,
  whatsapp: <Svg width="25" height="25"><path d="M1.500 23.500l1.500-6A11 11 0 1 1 7.500 21.900z" fill="#1c1c1c" stroke="#25d366" strokeWidth="2.400" /><path d="M8.500 6.500c-3 2 0 7 3 9.500s7 2.500 7.500-.5l-3-1.500-1.500 1.500c-2-.8-3.500-2.500-4.500-4.500l1.200-1.500z" fill="#25d366" /></Svg>,
  power: <Svg width="19" height="24"><rect x="10" y="0" width="9" height="24" rx="1" fill="#e3a613" /><rect x="5" y="6" width="9" height="18" rx="1" fill="#f2c52b" /><rect x="0" y="12" width="9" height="12" rx="1" fill="#fae17a" /></Svg>,
  jupyter: <Svg width="18" height="24"><path d="M1 9C3 1 15 1 17 9 13 5.500 5 5.500 1 9zM1 14c2 8 14 8 16 0-4 3.500-12 3.500-16 0z" fill="#f37726" /><circle cx="16" cy="2" r="1.300" fill="#999" /><circle cx="2" cy="3" r="1" fill="#777" /><circle cx="3" cy="22" r="1.500" fill="#999" /></Svg>,
};

const Defs = styled.svg`position: absolute; width: 0; height: 0;`;

export default function App() {
  return (
    <Window>
      <Global />
      <TitleBar>
        <QuickAccess>
          <ExcelSmall /><Rule $h={13} $m="0 7px 0 4px" /><Save /><Spacer $w={8} /><Undo /><Spacer $w={5} /><Caret c="#111" /><Spacer $w={8} /><Undo c="#b9bcc1" flip /><Spacer $w={5} /><Caret c="#aaa" /><Rule $h={13} $m="0 4px 0 7px" />
          <Svg width="7" height="7"><path d="M0 .5h7" stroke="#222" strokeWidth="1.300" /><path d="M0 3h7L3.500 6.500z" fill="#222" /></Svg>
        </QuickAccess>
        <TitleStrip>
          <TitleText>Sales_KPI_Dashboard.xlsx.xlsm  -  Microsoft Excel (Product Activation Failed)</TitleText>
          <ContextTitle>PivotTable Tools</ContextTitle>
        </TitleStrip>
        <WinControls>
          <Svg width="10" height="10"><path d="M0 5.500h10" stroke="#222" /></Svg>
          <Svg width="11" height="11" fill="none" stroke="#222"><path d="M.5 2.500h7v7h-7zM2.500 2.500v-2h7v7h-2" /></Svg>
          <Svg width="11" height="11" stroke="#222" strokeWidth="1.200"><path d="M.5.500l10 10M10.500.500l-10 10" /></Svg>
        </WinControls>
      </TitleBar>
      <TabRow>
        <FileTab>File</FileTab>
        <Tab $w={56} $active $ls={0.1}>Home</Tab>
        <Tab $w={59}>Insert</Tab><Tab $w={89} $ls={-0.22}>Page Layout</Tab><Tab $w={75} $ls={-0.2}>Formulas</Tab><Tab $w={52} $ls={-0.1}>Data</Tab><Tab $w={63} $ls={-0.1}>Review</Tab><Tab $w={55}>View</Tab><Tab $w={78} $ls={-0.18}>Developer</Tab>
        <Spacer $w={4} />
        <ContextTabs><Tab $w={60} $ls={-0.1}>Options</Tab><Tab $w={73}>Design</Tab></ContextTabs>
        <TabTools>
          <Svg width="10" height="8" fill="none" stroke="#444"><path d="M1 4.500L5 .7l4 3.800-1.500 1.500L5 3.800 2.500 6z" /></Svg>
          <Svg width="16" height="16"><circle cx="8" cy="8" r="7.700" fill="#3c74c6" stroke="#2b5aa5" strokeWidth=".6" /><text x="4.800" y="12.500" fontSize="12" fontWeight="700" fill="#fff" fontFamily="Open Sans">?</text></Svg>
          <Svg width="13" height="5" fill="none" stroke="#444"><rect x="1.500" y=".5" width="10" height="4" rx="1" /></Svg>
          <Svg width="14" height="11" fill="none" stroke="#444"><rect x="1.500" y="3.500" width="7" height="7" /><path d="M5 3.500v-3h7.500v6H9M4 6.500h3v2H4z" /></Svg>
          <Svg width="12" height="10" fill="none" stroke="#444"><path d="M1 .7h3l2 2 2-2h3v1.600L8.500 5 11 7.700v1.600H8l-2-2-2 2H1V7.700L3.500 5 1 2.300z" /></Svg>
        </TabTools>
      </TabRow>
      <RibbonPanel />
      <RibbonEdge />
      <Work>
        <Sheet>
          <Defs><defs><linearGradient id="peach" x1="0" y1="0" x2="0" y2="1"><stop offset="0" stopColor="#ffe9da" /><stop offset="1" stopColor="#ffbf8d" /></linearGradient></defs></Defs>
          <Slicers>
            {['Chennai', 'Delhi', 'Mumbai', 'Nagpur', 'Patna', 'Pune', 'Ranchi', 'Surat'].map(c => <Slicer key={c} $on={c === 'Mumbai'}>{c}</Slicer>)}
            <SlicerEdge />
          </Slicers>
          <CalloutRow>
            <CalloutBox w={206} ml={79} pl={36} n={1} />
            <CalloutBox w={206} ml={140} mt={-1} pl={41} n={2} />
            <CalloutBox w={200} ml={84} pl={37} n={3} />
            <CalloutBox w={201} ml={96} pl={36} n={4} />
          </CalloutRow>
          <Tables>
            <DataTable w={370} ml={0} cut cols="209px 160px" pr0={5} pr1={0} fr={1} heads={['Sales Executive', 'Total Sales']} rows={[['Isha Singh', 3146], ['Pooja Desai', 2299], ['Rahul Chawla', 2195], ['Rohan Patel', 2141], ['Siddharth Rao', 2135]]} />
            <DataTable w={295} ml={13} rule cols="178px 115px" pr0={0} heads={['Sales Executive', 'Total Sales']} rows={zip([245, 281, 143, 207, 189])} />
            <DataTable w={266} ml={21} rule line cols="137px 127px" pr0={0} heads={['Sales Executive', 'Target Hit % wise']} rows={zip(pct)} />
            <DataTable w={320} ml={21} sel rule line cols="138px 180px" pr0={1} heads={['Sales Executive', 'Away from Target wise']} rows={zip(pct)} />
          </Tables>
          <Charts>
            <Chart $w={373} $h={241} $mt={1} $cut><BarChart /></Chart>
            <Chart $w={291} $h={243} $ml={14}><ColumnChart /></Chart>
            <Chart $w={269} $h={247} $ml={24}><PieChart /></Chart>
            <Chart $w={400} $h={247} $ml={16} $mt={1}><LineChart /></Chart>
          </Charts>
          <Watermark><WatermarkTitle>Activate Windows</WatermarkTitle><WatermarkNote>Go to Settings to activate Windows.</WatermarkNote></Watermark>
        </Sheet>
        <VScroll>
          <SplitBox />
          <ArrowBox $h={17}><Svg width="9" height="5"><path d="M0 5h9L4.500 0z" fill="#444" /></Svg></ArrowBox>
          <VThumb><Svg width="8" height="9" stroke="#777d86"><path d="M0 1.500h8M0 3.500h8M0 5.500h8M0 7.500h8" /></Svg></VThumb>
          <Spacer />
          <ArrowBox $h={17}><Svg width="9" height="5"><path d="M0 0h9L4.500 5z" fill="#444" /></Svg></ArrowBox>
        </VScroll>
      </Work>
      <SheetBar>
        <Nav>
          <Svg width="6" height="7" fill="#3f4650"><path d="M0 0h1.300v7H0zM6 0v7L2 3.500z" /></Svg><Svg width="5" height="7" fill="#3f4650"><path d="M4.500 0v7L.5 3.500z" /></Svg>
          <Svg width="5" height="7" fill="#3f4650"><path d="M.5 0v7l4-3.500z" /></Svg><Svg width="7" height="7" fill="#3f4650"><path d="M5.500 0h1.300v7H5.500zM.5 0v7l4-3.500z" /></Svg>
        </Nav>
        <SheetTabs>
          <TabShape width="220" height="15"><path d="M147 14.500h30L188 .5H158z" fill="#e9ecf1" stroke="#9aa3b0" /><path d="M73 14.500h72L156 .5H84z" fill="#e9ecf1" stroke="#9aa3b0" /><path d="M0 0h84L73 14.500H0z" fill="#fff" /><path d="M84 .5L73 14.500" stroke="#9aa3b0" /></TabShape>
          <TabName $w={76} $on $ls={-0.15}>dashbord</TabName><TabName $w={69} $ls={-0.2}>row data</TabName>
          <NewTab><Svg width="15" height="13"><path d="M4.500 3.500h9v8h-7l-2-2z" fill="#dfeafb" stroke="#4668a3" /><path d="M3.500 0v7M0 3.500h7M1 1l5 5M6 1L1 6" stroke="#e79b22" strokeWidth="1.100" /></Svg></NewTab>
        </SheetTabs>
        <HScroll>
          <VSplit /><ArrowBox $h={15}><Svg width="5" height="8"><path d="M5 0v8L0 4z" fill="#444" /></Svg></ArrowBox><Spacer $w={1} />
          <HThumb><Svg width="8" height="7" stroke="#777d86"><path d="M.5 0v7M2.500 0v7M4.500 0v7M6.500 0v7" /></Svg></HThumb>
          <Spacer /><ArrowBox $h={15}><Svg width="5" height="8"><path d="M0 0v8l5-4z" fill="#444" /></Svg></ArrowBox><VSplit />
        </HScroll>
      </SheetBar>
      <Status>
        <StatusText $w={44} $pl={4}>Ready</StatusText><StatusRule /><Spacer $w={8} />
        <Svg width="15" height="13"><rect x="1.500" y=".5" width="13" height="12" fill="#fff" stroke="#4569a5" /><path d="M2 1h12v3H2z" fill="#4a73be" /><path d="M3 6h3M7 6h3M11 6h2M3 8.500h3M7 8.500h3M11 8.500h2M3 11h3M7 11h3M11 11h2" stroke="#6e92ce" /><circle cx="3" cy="3" r="2.800" fill="#d8442d" /></Svg>
        <Spacer $w={10} /><StatusRule />
        <Spacer />
        <StatusText $w={90} $ls={-0.14}>Average: 0.426</StatusText><StatusText $w={66}>Count: 12</StatusText><StatusText $w={60} $ls={-0.15}>Sum: 2.13</StatusText><StatusRule /><Spacer $w={2} />
        <Slot $w={19} $h={19} $on><Svg width="13" height="11" fill="#fff" stroke="#555"><path d="M.5.500h12v10H.5zM4.500 0v10M8.500 0v10M0 3.800h12M0 7.200h12" /></Svg></Slot>
        <Slot $w={18}><Svg width="13" height="12" fill="#9ba1a8" stroke="#555b64"><path d="M.5.500h12v11H.5z" /><path d="M3.500 2.500h6v7h-6z" fill="#fff" /><path d="M5 4.500h3M5 6.500h3" /></Svg></Slot>
        <Slot $w={20}><Svg width="13" height="12" fill="#b2b7bd" stroke="#555b64"><path d="M.5.500h12v11H.5z" /><path d="M1.500 1h3v6h-3zM5.500 1h3v6h-3z" fill="#fff" strokeWidth=".7" /></Svg></Slot>
        <StatusText $w={44} $pl={9} $ls={-0.2}>100%</StatusText>
        <Round><Svg width="8" height="2"><rect width="8" height="2" fill="#444" /></Svg></Round>
        <Svg width="100" height="15"><path d="M0 7.500h100" stroke="#747b85" /><path d="M46.500 1.500h8v8l-4 3.500-4-3.500z" fill="#f4f5f7" stroke="#5f6670" /></Svg>
        <Round><Svg width="8" height="8"><path d="M3 0h2v8H3zM0 3h8v2H0z" fill="#444" /></Svg></Round><Spacer $w={4} />
      </Status>
      <Taskbar>
        <Start><Svg width="16" height="16" fill="#fff"><path d="M0 2.200L6.700 1.300v6.200H0zM7.700 1.100L16 0v7.500H7.700zM0 8.500h6.700v6.200L0 13.800zM7.700 8.500H16V16l-8.300-1.100z" /></Svg></Start>
        <Search>
          <Svg width="17" height="17" fill="none" stroke="#222" strokeWidth="1.400"><circle cx="10.500" cy="6.500" r="5.500" /><path d="M6.500 10.500L.5 16.500" /></Svg>
          <SearchText>Type here to search</SearchText><Spacer $w={13} /><Hand />
        </Search>
        <TaskApp>{Icons.task}</TaskApp><Spacer $w={1} /><TaskApp>{Icons.copilot}</TaskApp><TaskApp>{Icons.store}</TaskApp><TaskApp $open $active>{Icons.excel}</TaskApp><TaskApp $open>{Icons.edge}</TaskApp><TaskApp>{Icons.outlook}</TaskApp><TaskApp>{Icons.word}</TaskApp>
        <TaskApp $open><Chrome /></TaskApp><TaskApp>{Icons.folder}</TaskApp><TaskApp>{Icons.mysql}</TaskApp><TaskApp $open><Chrome badge /></TaskApp><TaskApp $open>{Icons.whatsapp}<Badge>28</Badge></TaskApp><TaskApp $open>{Icons.power}</TaskApp><TaskApp $open>{Icons.jupyter}</TaskApp>
        <Spacer $w={23} />
        <Svg width="24" height="40"><path d="M6 9l12-1 4 3-2 15-15 1z" fill="#3ba757" /><path d="M3 11l16-1 3 4-3 13-16 4z" fill="#1c7fd0" /><rect x="0" y="13" width="18" height="13" rx="2" fill="#35b4ee" /><circle cx="6" cy="18" r="2.300" fill="#fff" /><path d="M10 17.500h5M10 21h5M4 23h5" stroke="#fff" strokeWidth="1.500" /></Svg>
        <NewsText>Supr...</NewsText>
        <Tray>
          <Spacer $w={9} />
          <Svg width="11" height="7" fill="none" stroke="#fff" strokeWidth="1.300"><path d="M.5 6.500l5-5.500 5 5.500" /></Svg><Spacer $w={11} />
          <Svg width="16" height="11"><path d="M2 .500h12v9H2zM14 3h1.500v4H14" fill="none" stroke="#fff" strokeWidth="1.200" /><path d="M4 2.500h5v5H4z" fill="#fff" /><path d="M1 3v8" stroke="#fff" /></Svg><Spacer $w={8} />
          <Svg width="15" height="13" fill="none" stroke="#fff"><path d="M.5 4.500h2L6 1v11L2.500 8.500h-2zM9.500 4l5 5M14.500 4l-5 5" /></Svg><Spacer $w={11} />ENG
        </Tray>
        <Clock>17:37<br />13-08-2025</Clock>
        <Spacer $w={12} />
        <Svg width="16" height="40"><path d="M.7 13.700h14.600v11.600H12V29l-4-3.700H.7z" fill="none" stroke="#fff" strokeWidth="1.200" /></Svg>
      </Taskbar>
    </Window>
  );
}
